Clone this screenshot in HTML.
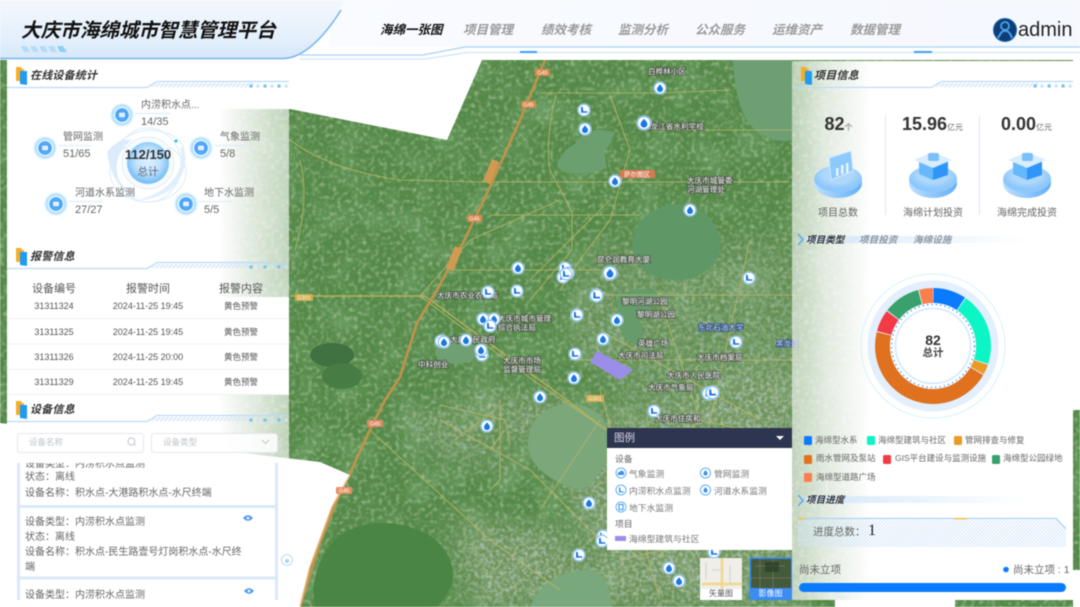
<!DOCTYPE html>
<html lang="zh"><head><meta charset="utf-8"><title>大庆市海绵城市智慧管理平台</title>
<style>
html,body{margin:0;padding:0;width:1080px;height:607px;overflow:hidden;background:#fff}
#r{position:absolute;left:0;top:0;width:1080px;height:607px;overflow:hidden;filter:blur(.4px);font-family:"Liberation Sans","Noto Sans CJK SC",sans-serif;color:#666}
.t{position:absolute;white-space:nowrap;line-height:0;font-size:10px}
.c{transform:translateX(-50%)}
.h{font-weight:700;font-style:italic;color:#333;font-size:11px;letter-spacing:.2px}
.n{font-weight:700;font-style:italic;color:#9a9a9a;font-size:12.5px}
.b{position:absolute}
svg{position:absolute;left:0;top:0}
text{font-family:"Liberation Sans","Noto Sans CJK SC",sans-serif}
.d{font-size:11px}
.r1{font-size:9px;color:#555}
.r2{font-size:8.5px;color:#555}
.l{font-size:8.5px;color:#666}
.i{font-size:8.8px;color:#777}
</style></head><body><div id="r">

<svg width="1080" height="607" viewBox="0 0 1080 607">
<defs>
<filter id="sp" x="0" y="0" width="100%" height="100%"><feTurbulence type="fractalNoise" baseFrequency=".24" numOctaves="3" seed="7"/><feColorMatrix values="0 0 0 0 .74 0 0 0 0 .8 0 0 0 0 .62 0 0 0 2.600 -1.250"/><feGaussianBlur stdDeviation=".4"/></filter>
<filter id="sp2" x="0" y="0" width="100%" height="100%"><feTurbulence type="fractalNoise" baseFrequency=".03" numOctaves="2" seed="3"/><feColorMatrix values="0 0 0 0 .22 0 0 0 0 .44 0 0 0 0 .2 0 0 0 2.500 -1.150"/></filter>
<filter id="sp3" x="0" y="0" width="100%" height="100%"><feTurbulence type="fractalNoise" baseFrequency=".28" numOctaves="2" seed="21"/><feColorMatrix values="0 0 0 0 .8 0 0 0 0 .82 0 0 0 0 .74 0 0 0 4 -1.800"/><feGaussianBlur stdDeviation=".3"/></filter>
<filter id="sp4" x="0" y="0" width="100%" height="100%"><feTurbulence type="fractalNoise" baseFrequency=".16" numOctaves="2" seed="40"/><feColorMatrix values="0 0 0 0 .45 0 0 0 0 .65 0 0 0 0 .85 0 0 0 6 -3.500"/></filter>
<filter id="bl" x="-20%" y="-20%" width="140%" height="140%"><feGaussianBlur stdDeviation="14"/></filter>
<mask id="um" maskUnits="userSpaceOnUse" x="0" y="60" width="1080" height="547"><g filter="url(#bl)" fill="#fff"><path d="M450 380 L640 420 L800 360 V607 H610L560 470Z"/><path d="M590 250 L800 240 V420 L640 420 L560 330Z" opacity=".6"/><path d="M450 520L560 530L610 607H470Z"/><path d="M385 410L470 410L520 470L440 460Z" opacity=".8"/></g></mask>
<symbol id="dr" viewBox="-7 -7 14 14" overflow="visible"><circle r="6.6" fill="#fff"/><circle r="5.8" fill="none" stroke="#4aa3f5" stroke-width=".8"/><path d="M0-3.8C1.6-1.7 3-.5 3 1.1A3 3 0 0 1-3 1.1C-3-.5-1.600-1.700 0-3.800Z" fill="#1b78e0"/></symbol>
<symbol id="lm" viewBox="-7 -7 14 14" overflow="visible"><circle r="6.6" fill="#fff"/><circle r="5.8" fill="none" stroke="#4aa3f5" stroke-width=".8"/><path d="M-3 2.8H3.300V1.200H-.6C-1-.2-1.200-2-1.400-3.400L-3-3Z" fill="#1b78e0"/></symbol>
</defs>
<rect x="0" y="60" width="1080" height="547" fill="#548948"/>
<rect x="0" y="60" width="1080" height="547" filter="url(#sp2)" opacity=".45"/>
<rect x="0" y="60" width="1080" height="547" filter="url(#sp)" opacity=".5"/>
<g mask="url(#um)">
<rect x="0" y="60" width="1080" height="547" fill="#9fa684" opacity=".35"/>
<rect x="0" y="60" width="1080" height="547" filter="url(#sp3)" opacity=".35"/>
<rect x="0" y="60" width="1080" height="547" filter="url(#sp4)" opacity=".4"/>
</g>
<!-- lakes -->
<path d="M557 165Q562 150 575 144Q583 130 600 130L615 132Q610 145 604 152L607 168Q590 175 575 173Q560 174 557 165Z" fill="#6c9f70"/>
<path d="M633 240C637 215 660 203 680 204C705 206 722 225 720 248C718 268 695 282 675 280C650 280 630 262 633 240Z" fill="#5f9767"/>
<path d="M733 60H792V140Q770 145 750 125Q735 105 733 60Z" fill="#6d9f72"/>
<path d="M528 440C530 415 550 403 572 404C592 405 610 420 610 440C608 465 595 485 580 490C560 485 526 470 528 440Z" fill="#7ca77b"/>
<path d="M618 295Q640 285 657 292L650 310L640 320L645 343Q625 345 618 325Z" fill="#669c6c"/>
<path d="M313 590C318 550 340 522 385 523C430 525 453 550 453 575C453 590 440 607 430 607H315Z" fill="#4a8544"/>
<ellipse cx="332" cy="355" rx="22" ry="12" fill="#3f7240"/>
<ellipse cx="342" cy="376" rx="20" ry="13" fill="#477d44"/>
<ellipse cx="456" cy="352" rx="21" ry="12" fill="#6fa073"/>
<path d="M530 607Q545 570 590 570Q610 575 612 607Z" fill="#79a87c"/>
<!-- roads -->
<g fill="none" stroke="#bdb86c" stroke-width="1.100" opacity=".75">
<path d="M290 296H420L530 378L680 480"/><path d="M420 296L470 240L560 200"/><path d="M540 93H660L730 90"/><path d="M480 182H620H790"/>
<path d="M556 95Q545 140 550 170L572 212L572 250L530 300"/><path d="M610 95L630 150L610 220L580 260L560 290"/>
<path d="M370 430L490 540L560 590"/><path d="M440 420L530 470L600 540"/><path d="M490 215H640"/><path d="M450 270H610"/>
<path d="M605 295H800"/><path d="M570 360H800"/><path d="M600 330L760 420"/><path d="M750 240L730 330L710 420"/><path d="M650 130H792"/>
<path d="M540 510L600 420"/><path d="M530 280L610 200"/><path d="M620 500L700 420L790 440"/><path d="M660 300L700 420"/><path d="M600 390L660 600"/>
<path d="M290 140Q330 170 400 180L480 182"/><path d="M300 160Q310 200 295 250"/><path d="M590 540L640 510L720 500"/><path d="M620 560L790 520"/>
<path d="M440 405L505 420L510 445M470 430L495 410M455 440L480 420M490 450L505 430M500 400L500 480L490 490"/>
</g>
<path d="M290 296H425L560 395L660 470L760 540" fill="none" stroke="#b8b35e" stroke-width="1.600" opacity=".85"/>
<path d="M545 60L520 120L490 187L463 243L437 290L417 323L400 377L385 400L370 430L350 473L337 500L320 543L300 607" fill="none" stroke="#c1934c" stroke-width="2.600"/>
<!-- white tiles -->
<path d="M7 60H482L447 140L290 109H7Z" fill="#fff"/>
<path d="M0 423L260 455L320 462L350 475L332 507L310 567L300 607H0Z" fill="#fff"/>
<path d="M300 607L310 567L332 507L350 475" fill="none" stroke="#e8b27a" stroke-width="1.400"/>
<path d="M1073 60H1080V410H1073Z M1073 570H1080V607H1073Z" fill="#fff"/>
<path d="M835 600H955V607H835Z" fill="#fff"/>
<!-- purple polygon -->
<path d="M597 351L633 370L620 380L590 362Z" fill="#9a8eea"/>
<!-- badges -->
<g font-size="5.500" text-anchor="middle" fill="#fff">
<rect x="535" y="69" width="15" height="7" rx="1" fill="#d88a4e"/><text x="542.500" y="74.600">G45</text>
<rect x="521" y="101" width="15" height="7" rx="1" fill="#d88a4e"/><text x="528.500" y="106.600">G45</text>
<rect x="467" y="215" width="15" height="7" rx="1" fill="#d88a4e"/><text x="474.500" y="220.600">G45</text>
<rect x="295" y="294" width="18" height="7" rx="1" fill="#cfae4e"/><text x="304" y="299.600">G301</text>
<rect x="586" y="395" width="18" height="7" rx="1" fill="#cfae4e"/><text x="595" y="400.600">G301</text>
<rect x="367" y="420" width="16" height="7" rx="1" fill="#dd8a64"/><text x="375" y="425.600">G45</text>
<rect x="336" y="487" width="16" height="7" rx="1" fill="#e58f64"/><text x="344" y="492.600">G45</text>
</g>
<g fill="#d09a52" transform="rotate(-68 492 172)"><rect x="480" y="167" width="24" height="8" rx="1"/></g>
<g fill="#d09a52" transform="rotate(-68 455 259)"><rect x="443" y="254" width="24" height="8" rx="1"/></g>
<rect x="620" y="170" width="35" height="8" rx="1" fill="#d97950"/>
<text x="637" y="176.500" font-size="6.500" text-anchor="middle" fill="#fff">萨尔图区</text>
<g font-size="7.600" fill="#eee" stroke="#444" stroke-width="1.800" paint-order="stroke" stroke-opacity=".7">
<text x="687" y="183">大庆市城管委</text><text x="687" y="192">河湖管理处</text>
<text x="597" y="262">昆仑润教育大厦</text><text x="437" y="298">大庆市农业农村局</text><text x="498" y="321">大庆市城市管理</text><text x="498" y="330">综合执法局</text><text x="450" y="342">大庆市民政府</text>
<text x="503" y="363">大庆市市场</text><text x="503" y="372">监督管理局</text><text x="418" y="367">中科创业</text><text x="618" y="358">大庆市司法局</text><text x="697" y="360">大庆市档案局</text>
<text x="667" y="378">大庆市人民医院</text><text x="648" y="390">大庆市气象局</text><text x="655" y="421">大庆市住房和</text><text x="622" y="304">黎明河湖公园</text><text x="637" y="317">黎明湖公园</text><text x="638" y="346">英雄广场</text>
<text x="648" y="74">白桦林小区</text><text x="643" y="129">黑龙江省水利学校</text>
</g>
<text x="698" y="330" font-size="7.600" fill="#cfe0ff" stroke="#2d4a80" stroke-width="1.500" paint-order="stroke">东北石油大学</text>
<text x="776" y="346" font-size="7.600" fill="#cfe0ff" stroke="#2d4a80" stroke-width="1.500" paint-order="stroke">黑龙江</text>
<!-- markers -->
<g>
<use href="#lm" x="577" y="103" width="14" height="14"/><use href="#dr" x="578" y="122" width="14" height="14"/><use href="#dr" x="653" y="81" width="14" height="14"/><use href="#dr" x="636" y="115" width="16" height="16"/>
<use href="#dr" x="608" y="174" width="14" height="14"/><use href="#dr" x="683" y="203" width="14" height="14"/><use href="#dr" x="511" y="261" width="14" height="14"/><use href="#dr" x="602" y="265" width="16" height="16"/>
<use href="#lm" x="558" y="261" width="14" height="14"/><use href="#lm" x="556" y="270" width="14" height="14"/><use href="#lm" x="561" y="266" width="14" height="14"/><use href="#lm" x="559" y="267" width="14" height="14"/>
<use href="#lm" x="742" y="271" width="14" height="14"/><use href="#lm" x="481" y="285" width="14" height="14"/><use href="#lm" x="510" y="284" width="14" height="14"/><use href="#lm" x="589" y="288" width="15" height="15"/><use href="#lm" x="570" y="308" width="14" height="14"/>
<use href="#dr" x="610" y="313" width="14" height="14"/><use href="#dr" x="476" y="312" width="14" height="14"/><use href="#dr" x="487" y="312" width="14" height="14"/><use href="#lm" x="483" y="319" width="14" height="14"/><use href="#dr" x="596" y="332" width="14" height="14"/>
<use href="#lm" x="434" y="334" width="14" height="14"/><use href="#dr" x="437" y="335" width="14" height="14"/><use href="#dr" x="459" y="333" width="14" height="14"/><use href="#lm" x="475" y="348" width="14" height="14"/><use href="#dr" x="474" y="343" width="14" height="14"/>
<use href="#lm" x="568" y="347" width="14" height="14"/><use href="#dr" x="567" y="371" width="14" height="14"/><use href="#dr" x="533" y="390" width="14" height="14"/><use href="#lm" x="729" y="335" width="14" height="14"/>
<use href="#lm" x="701" y="386" width="15" height="15"/><use href="#lm" x="705" y="385" width="15" height="15"/><use href="#lm" x="647" y="404" width="14" height="14"/><use href="#dr" x="480" y="419" width="14" height="14"/><use href="#dr" x="582" y="496" width="14" height="14"/>
<use href="#lm" x="596" y="529" width="14" height="14"/><use href="#lm" x="595" y="534" width="14" height="14"/><use href="#lm" x="572" y="548" width="14" height="14"/><use href="#dr" x="662" y="561" width="14" height="14"/><use href="#dr" x="672" y="574" width="14" height="14"/><use href="#lm" x="707" y="545" width="14" height="14"/>
</g>
</svg>

<!-- left panel -->
<div class="b" style="left:7px;top:61px;width:282px;height:402px;background:linear-gradient(90deg,#fff 75%,rgba(255,255,255,.62) 100%)"></div>
<div class="b" style="left:7px;top:297px;width:282px;height:98px;background:#fff"></div>
<div class="b" style="left:0;top:463px;width:289px;height:144px;background:#fff"></div>
<!-- right panel -->
<div class="b" style="left:792px;top:61px;width:281px;height:539px;background:linear-gradient(90deg,rgba(255,255,255,.58) 0,rgba(255,255,255,.82) 12%,#fff 28%)"></div>

<!-- header -->
<svg width="1080" height="70" viewBox="0 0 1080 70">
<defs>
<linearGradient id="hg" x1="0" y1="0" x2="0" y2="1"><stop offset="0" stop-color="#f4f8fd"/><stop offset=".7" stop-color="#e3effb"/><stop offset="1" stop-color="#d5e8fa"/></linearGradient>
<linearGradient id="hb" x1="0" y1="0" x2="1" y2="0"><stop offset="0" stop-color="#f9fbff"/><stop offset="1" stop-color="#f5f8fe"/></linearGradient>
<pattern id="ht" width="3" height="3" patternUnits="userSpaceOnUse" patternTransform="rotate(45)"><rect width="1.400" height="3" fill="#cfe4f8"/></pattern>
</defs>
<rect width="1080" height="60" fill="#fff"/>
<rect x="330" width="750" height="47" fill="url(#hb)"/>
<path d="M0 0H345L338 12Q315 52 290 58H0Z" fill="url(#hg)"/>
<path d="M0 58.500H285Q312 56 341 10" fill="none" stroke="#74b4ea" stroke-width="1.600"/>
<path d="M300 55H423L465 47H1080" fill="none" stroke="#a9d1f5" stroke-width="1.200"/>
<path d="M300 59H425L467 52.500H1080" fill="none" stroke="#cfe4f8" stroke-width="1.200"/>
<rect x="520" y="51" width="17" height="2" fill="#3ba0f5"/><rect x="914" y="51" width="18" height="2" fill="#3ba0f5"/>
<g fill="#b5dcf7"><path d="M21 46h6l3 6h-6z"/><path d="M30 46h6l3 6h-6z"/><path d="M39 46h6l3 6h-6z"/><path d="M48 46h6l3 6h-6z"/><path d="M57 46h6l4 6h-7z" fill="#8cd0f2"/></g>
<circle cx="1005" cy="30" r="11.500" fill="#0e3d78"/>
<circle cx="1005" cy="30" r="11.500" fill="none" stroke="#1a6ab0" stroke-width="1"/>
<circle cx="1005" cy="26" r="4" fill="none" stroke="#4ba2e8" stroke-width="1.800"/>
<path d="M998 38Q1002 30 1005 31Q1009 30 1012 38" fill="none" stroke="#4ba2e8" stroke-width="2"/>
</svg>
<div class="t" style="left:21px;top:31px;font-size:19.600px;font-weight:700;font-style:italic;color:#111">大庆市海绵城市智慧管理平台</div>
<div class="t n" style="left:380px;top:30px;color:#111">海绵一张图</div>
<div class="t n" style="left:463px;top:30px">项目管理</div>
<div class="t n" style="left:541px;top:30px">绩效考核</div>
<div class="t n" style="left:618px;top:30px">监测分析</div>
<div class="t n" style="left:695px;top:30px">公众服务</div>
<div class="t n" style="left:772px;top:30px">运维资产</div>
<div class="t n" style="left:850px;top:30px">数据管理</div>
<div class="t" style="left:1018px;top:30px;font-size:20px;color:#222">admin</div>

<!-- overlays svg: section headers, icons -->
<svg width="1080" height="607" viewBox="0 0 1080 607">
<defs>
<symbol id="hd" viewBox="0 0 282 30" overflow="visible">
<path d="M9 6h5l1 2h2v12H9z" fill="#f5ae24"/><path d="M13 10h7v14l-7-1z" fill="#1e9bf5"/>
<path d="M0 26.500H140L150 20.500H282" fill="none" stroke="#bcd9f5" stroke-width="1.200"/>
<path d="M144 26L149 22H250L245 26Z" fill="url(#ht)"/>
<g fill="#7cc3f5"><circle cx="244" cy="25" r="1.800"/><circle cx="258" cy="25" r="1.800"/><circle cx="272" cy="25" r="1.800"/></g>
<g fill="#c9e5fa"><circle cx="251" cy="25" r="1.800"/><circle cx="265" cy="25" r="1.800"/><circle cx="279" cy="25" r="1.800"/></g>
</symbol>
<radialGradient id="ic"><stop offset="0" stop-color="#8ed0ff"/><stop offset=".52" stop-color="#3f9ef8"/><stop offset=".6" stop-color="#f2faff"/><stop offset=".78" stop-color="#a6dbff"/><stop offset="1" stop-color="#dff2ff" stop-opacity=".3"/></radialGradient>
<symbol id="de" viewBox="-12 -12 24 24" overflow="visible"><circle r="12" fill="url(#ic)"/><rect x="-3.500" y="-2.800" width="7" height="5.500" rx="1" fill="#dff1ff" stroke="#2c86e8" stroke-width=".7"/></symbol>
<radialGradient id="cc" cx=".5" cy=".45" r=".55"><stop offset="0" stop-color="#dff1ff"/><stop offset=".55" stop-color="#bfe2fc"/><stop offset="1" stop-color="#6fbaf6"/></radialGradient>
<radialGradient id="pod" cx=".5" cy=".35"><stop offset="0" stop-color="#dceeff"/><stop offset="1" stop-color="#8ec8fb"/></radialGradient>
<linearGradient id="pd2" x1="0" x2="1" y1="0" y2="0"><stop offset="0" stop-color="#bfe0ff"/><stop offset="1" stop-color="#62aefa"/></linearGradient>
<symbol id="pd" viewBox="0 0 50 50" overflow="visible">
<ellipse cx="25" cy="33" rx="24" ry="15" fill="url(#pd2)"/><ellipse cx="25" cy="29" rx="24" ry="13.500" fill="url(#pod)"/><ellipse cx="25" cy="26" rx="15" ry="8" fill="#aed8fb"/>
</symbol>
<symbol id="cu" viewBox="0 0 50 50" overflow="visible">
<path d="M11 10L25 14V29L11 23Z" fill="#67b7fb"/><path d="M25 14L40 9V24L25 29Z" fill="#2f96f8"/>
<path d="M25 1L44 9L25 17L6 9Z" fill="#d8edff"/><rect x="20" y="2" width="11" height="8" rx="2" fill="#7cc0fa"/>
</symbol>
<linearGradient id="fb" x1="0" x2="1"><stop offset="0" stop-color="#d4e8fa"/><stop offset="1" stop-color="#d4e8fa" stop-opacity="0"/></linearGradient>
<pattern id="ph" width="2.500" height="2.500" patternUnits="userSpaceOnUse" patternTransform="rotate(45)"><rect width="1" height="2.500" fill="#d3e6f8"/></pattern>
</defs>
<use href="#hd" x="7" y="61" width="282" height="30"/>
<use href="#hd" x="7" y="242" width="282" height="30"/>
<use href="#hd" x="7" y="395" width="282" height="30"/>
<use href="#hd" x="792" y="61" width="281" height="30"/>

<!-- centre globe -->
<g fill="none" stroke="#dcecfb" stroke-width="1">
<ellipse cx="148" cy="172" rx="38" ry="30"/>
<ellipse cx="148" cy="165" rx="33" ry="37"/>
<path d="M112 150Q125 132 150 130Q178 132 184 148"/>
</g>
<path d="M107 152Q118 138 132 140Q112 155 118 178Q124 190 140 198Q112 190 107 152Z" fill="#d8eafb" opacity=".9"/>
<path d="M184 147Q190 172 170 190Q155 200 138 200Q168 192 178 172Q184 160 180 148Z" fill="#deedfb" opacity=".9"/>
<circle cx="148" cy="163" r="26" fill="#f6fbff" stroke="#e0eefb"/>
<circle cx="148" cy="163" r="21" fill="url(#cc)"/>
<circle cx="176" cy="141" r="1.500" fill="#1cb8f5"/>
<use href="#de" x="110" y="103" width="24" height="24"/>
<use href="#de" x="33" y="136" width="24" height="24"/>
<use href="#de" x="189" y="136" width="24" height="24"/>
<use href="#de" x="44" y="192" width="24" height="24"/>
<use href="#de" x="174" y="192" width="24" height="24"/>
<g stroke="#d8ecfc" stroke-width="1" fill="none">
<path d="M135 113.500H170"/><path d="M58 145.500H92"/><path d="M214 145.500H248"/><path d="M69 201.500H103"/><path d="M198 201.500H232"/>
</g>

<!-- table lines -->
<g stroke="#f0f2f5"><path d="M7 318.500H289M7 344H289M7 369.500H289M7 394.500H289"/></g>

<!-- search -->
<rect x="17.500" y="433.500" width="126" height="19" rx="3" fill="#fff" fill-opacity=".85" stroke="#e4e7ed"/>
<rect x="151.500" y="433.500" width="126" height="19" rx="3" fill="#fff" fill-opacity=".85" stroke="#e4e7ed"/>
<circle cx="131.500" cy="441.500" r="3.500" fill="none" stroke="#c0c4cc"/><path d="M134 444l1.500 1.500" stroke="#c0c4cc"/>
<path d="M262 440l3.500 3.500 3.500-3.500" fill="none" stroke="#c0c4cc"/>

<!-- device cards -->
<g fill="none" stroke="#dbe8f9" stroke-width="3">
<path d="M18.500 463V600M276.500 463V600"/>
<path d="M18 506.500H277M18 578H277"/>
</g>
<g fill="#4f9cf2"><path d="M243 518q5-5.500 10 0q-5 5.500-10 0Z"/><path d="M244 591q5-5.500 10 0q-5 5.500-10 0Z"/></g>
<circle cx="248" cy="518" r="1.300" fill="#fff"/><circle cx="249" cy="591" r="1.300" fill="#fff"/>
<circle cx="287" cy="560" r="5.500" fill="#fff" stroke="#bcdcf8"/><circle cx="287" cy="561" r="2" fill="#a8d2f6"/>

<!-- right top stats -->
<path d="M885.500 115V215M979.500 115V215" stroke="#d9eafb"/>
<use href="#pd" x="813" y="150" width="50" height="50"/>
<use href="#pd" x="908" y="150" width="50" height="50"/>
<use href="#pd" x="1002" y="150" width="50" height="50"/>
<path d="M829 158L851 151L853 171L831 180Z" fill="#8ccafb" stroke="#d2e9ff"/><g fill="#fff" opacity=".8"><rect x="836" y="168" width="2.500" height="8"/><rect x="841" y="165" width="2.500" height="9"/><rect x="846" y="163" width="2.500" height="10"/></g>
<use href="#cu" x="908" y="151" width="50" height="50"/>
<use href="#cu" x="1002" y="151" width="50" height="50"/>

<!-- tabs -->
<rect x="806" y="236" width="220" height="7" fill="url(#fb)"/>
<path d="M798 234l5 5.500-5 5.500" fill="none" stroke="#59aef5" stroke-width="1.600"/>

<!-- donut -->
<circle cx="933" cy="346" r="72" fill="none" stroke="#d6f2fb" stroke-width="1"/>
<circle cx="933" cy="346" r="65.500" fill="#e3effc"/>
<g fill="none" stroke-width="15" transform="rotate(-90 933 346)">
<circle cx="933" cy="346" r="50.500" pathLength="360" stroke="#0a7bff" stroke-dasharray="33 327" stroke-dashoffset="-.5"/>
<circle cx="933" cy="346" r="50.500" pathLength="360" stroke="#0cf5c4" stroke-dasharray="73.500 286.500" stroke-dashoffset="-34.500"/>
<circle cx="933" cy="346" r="50.500" pathLength="360" stroke="#ea9a26" stroke-dasharray="10 350" stroke-dashoffset="-109"/>
<circle cx="933" cy="346" r="50.500" pathLength="360" stroke="#e0711f" stroke-dasharray="164 196" stroke-dashoffset="-120"/>
<circle cx="933" cy="346" r="50.500" pathLength="360" stroke="#f33b45" stroke-dasharray="22 338" stroke-dashoffset="-285"/>
<circle cx="933" cy="346" r="50.500" pathLength="360" stroke="#39a26c" stroke-dasharray="37 323" stroke-dashoffset="-308"/>
<circle cx="933" cy="346" r="50.500" pathLength="360" stroke="#fa7f4c" stroke-dasharray="14 346" stroke-dashoffset="-346"/>
</g>
<circle cx="933" cy="346" r="43" fill="#fff"/>
<circle cx="933" cy="346" r="41.500" fill="none" stroke="#4a98ea" stroke-width="1.400" stroke-dasharray="1.400 3"/>
<circle cx="933" cy="346" r="37.500" fill="#fff" stroke="#cfe6fb" stroke-width="1.500"/>

<!-- legend swatches -->
<rect x="804" y="436" width="8" height="9" rx="1.500" fill="#0a7bff"/><rect x="867" y="436" width="8" height="9" rx="1.500" fill="#0cf5c4"/><rect x="954" y="436" width="8" height="9" rx="1.500" fill="#ea9a26"/>
<rect x="804" y="455" width="8" height="9" rx="1.500" fill="#e0711f"/><rect x="883" y="455" width="8" height="9" rx="1.500" fill="#f33b45"/><rect x="992" y="455" width="8" height="9" rx="1.500" fill="#39a26c"/>
<rect x="804" y="473" width="8" height="9" rx="1.500" fill="#fa7f4c"/>

<!-- progress -->
<rect x="806" y="496" width="220" height="7" fill="url(#fb)"/>
<path d="M798 495l5 5.500-5 5.500" fill="none" stroke="#59aef5" stroke-width="1.600"/>
<path d="M798 520H1056L1066 531V547H798Z" fill="url(#ph)"/>
<path d="M798 518.500H1056L1066 529" fill="none" stroke="#a8d1f7" stroke-width="1.300"/>
<rect x="798" y="518" width="7" height="1.500" fill="#f2c24a"/><rect x="954" y="518" width="13" height="1.500" fill="#f2c24a"/>
<circle cx="1006" cy="569.500" r="2.800" fill="#0a7bff"/>
<rect x="799" y="583" width="267" height="9" rx="4.500" fill="#0a7bff"/>

<!-- legend box -->
<rect x="607" y="428" width="185" height="122" fill="#fff"/>
<rect x="607" y="428" width="185" height="20" fill="#2e3550"/>
<path d="M776 436h8l-4 4z" fill="#fff"/>
<g fill="none" stroke="#62b0f7" stroke-width="1"><circle cx="621" cy="473" r="5"/><circle cx="705.500" cy="473" r="5"/><circle cx="621" cy="490" r="5"/><circle cx="705.500" cy="490" r="5"/><circle cx="621" cy="507" r="5"/></g>
<path d="M618 475q-1-3 1.500-3 1-2 3-1 2 0 1.500 4z" fill="#3d8fe8"/><path d="M705.500 470c1 1.500 2 2.300 2 3.500a2 2 0 0 1-4 0c0-1.200 1-2 2-3.500z" fill="#3d8fe8"/><path d="M619 487.500v5h4.500v-1.300h-3v-3.700z" fill="#3d8fe8"/><path d="M705.500 487c1 1.500 2 2.300 2 3.500a2 2 0 0 1-4 0c0-1.200 1-2 2-3.500z" fill="#3d8fe8"/><path d="M619 504.500h4v5h-4z" fill="none" stroke="#3d8fe8"/>
<rect x="615" y="536" width="11" height="5" fill="#9a8eea"/>
<!-- thumbs -->
<rect x="700" y="558" width="42" height="42" fill="#fff"/>
<rect x="700" y="558" width="42" height="31" fill="#efeee8"/>
<path d="M702 584H742M722 558V589" stroke="#f2d68a" stroke-width="2.500" fill="none"/>
<path d="M706 562V580M712 570H722M730 565V584" stroke="#d8d6cd" stroke-width="1.200" fill="none"/>
<rect x="750" y="558" width="41.500" height="41.500" fill="#3c8cf2" stroke="#2f8cff"/>
<rect x="751" y="559" width="40" height="29" fill="#445a3a"/>
<path d="M755 566H785M760 559V588M773 559V588M751 578H791" stroke="#7a7a60" stroke-width=".7"/>
<rect x="765" y="562" width="14" height="10" fill="#2a3c26" opacity=".7"/>
</svg>

<div class="t h" style="left:30px;top:76px">在线设备统计</div>
<div class="t h" style="left:30px;top:257px">报警信息</div>
<div class="t h" style="left:30px;top:410px">设备信息</div>
<div class="t h" style="left:814px;top:76px">项目信息</div>

<div class="t" style="left:141px;top:106px">内涝积水点...</div><div class="t d" style="left:141px;top:122px">14/35</div>
<div class="t" style="left:63px;top:137.500px">管网监测</div><div class="t d" style="left:63px;top:154px">51/65</div>
<div class="t" style="left:220px;top:137.500px">气象监测</div><div class="t d" style="left:220px;top:154px">5/8</div>
<div class="t" style="left:75px;top:193.500px">河道水系监测</div><div class="t d" style="left:75px;top:210px">27/27</div>
<div class="t" style="left:204px;top:193.500px">地下水监测</div><div class="t d" style="left:204px;top:210px">5/5</div>
<div class="t c" style="left:148px;top:155px;font-size:13px;font-weight:700;color:#333">112/150</div>
<div class="t c" style="left:148px;top:172px;font-size:10.500px;color:#667">总计</div>

<div class="t c" style="left:54px;top:289px;font-size:11px;color:#555">设备编号</div>
<div class="t c" style="left:148px;top:289px;font-size:11px;color:#555">报警时间</div>
<div class="t c" style="left:241px;top:289px;font-size:11px;color:#555">报警内容</div>
<div class="t c r1" style="left:54px;top:306px">31311324</div><div class="t c r1" style="left:148px;top:306px">2024-11-25 19:45</div><div class="t c r2" style="left:241px;top:306px">黄色预警</div>
<div class="t c r1" style="left:54px;top:332px">31311325</div><div class="t c r1" style="left:148px;top:332px">2024-11-25 19:45</div><div class="t c r2" style="left:241px;top:332px">黄色预警</div>
<div class="t c r1" style="left:54px;top:356.500px">31311326</div><div class="t c r1" style="left:148px;top:356.500px">2024-11-25 20:00</div><div class="t c r2" style="left:241px;top:356.500px">黄色预警</div>
<div class="t c r1" style="left:54px;top:381.500px">31311329</div><div class="t c r1" style="left:148px;top:381.500px">2024-11-25 19:45</div><div class="t c r2" style="left:241px;top:381.500px">黄色预警</div>

<div class="t" style="left:29px;top:442px;font-size:8.500px;color:#c0c4cc">设备名称</div>
<div class="t" style="left:163px;top:442px;font-size:8.500px;color:#c0c4cc">设备类型</div>

<div class="b" style="left:20px;top:463px;width:255px;height:137px;overflow:hidden">
<div class="t" style="left:5px;top:2px">设备类型：内涝积水点监测</div>
<div class="t" style="left:5px;top:15px">状态：离线</div>
<div class="t" style="left:5px;top:31px">设备名称：积水点-大港路积水点-水尺终端</div>
<div class="t" style="left:5px;top:59.500px">设备类型：内涝积水点监测</div>
<div class="t" style="left:5px;top:74.500px">状态：离线</div>
<div class="t" style="left:5px;top:89.500px">设备名称：积水点-民生路壹号灯岗积水点-水尺终</div>
<div class="t" style="left:5px;top:104.500px">端</div>
<div class="t" style="left:5px;top:132.500px">设备类型：内涝积水点监测</div>
</div>

<div class="t c" style="left:838.500px;top:124px;font-size:18px;font-weight:700;color:#333">82<span style="font-size:8px;font-weight:400;color:#666">个</span></div>
<div class="t c" style="left:932.500px;top:124px;font-size:18px;font-weight:700;color:#333">15.96<span style="font-size:8px;font-weight:400;color:#666">亿元</span></div>
<div class="t c" style="left:1026.500px;top:124px;font-size:18px;font-weight:700;color:#333">0.00<span style="font-size:8px;font-weight:400;color:#666">亿元</span></div>
<div class="t c" style="left:838px;top:213.500px">项目总数</div>
<div class="t c" style="left:933px;top:213.500px">海绵计划投资</div>
<div class="t c" style="left:1027px;top:213.500px">海绵完成投资</div>
<div class="t h" style="left:806px;top:241px;font-size:9.500px;letter-spacing:.1px">项目类型</div>
<div class="t h" style="left:859px;top:241px;font-size:9.500px;letter-spacing:.1px;color:#8a96a3">项目投资</div>
<div class="t h" style="left:913px;top:241px;font-size:9.500px;letter-spacing:.1px;color:#8a96a3">海绵设施</div>

<div class="t c" style="left:933px;top:340px;font-size:14px;font-weight:700;color:#333">82</div>
<div class="t c" style="left:933px;top:353px;font-size:10.500px;font-weight:700;color:#444">总计</div>

<div class="t l" style="left:815px;top:440px">海绵型水系</div><div class="t l" style="left:878px;top:440px">海绵型建筑与社区</div><div class="t l" style="left:965px;top:440px">管网排查与修复</div>
<div class="t l" style="left:816px;top:458px">雨水管网及泵站</div><div class="t l" style="left:895px;top:458px">GIS平台建设与监测设施</div><div class="t l" style="left:1003px;top:458px">海绵型公园绿地</div>
<div class="t l" style="left:816px;top:477px">海绵型道路广场</div>

<div class="t h" style="left:806px;top:501px;font-size:9.500px;letter-spacing:.1px">项目进度</div>
<div class="t" style="left:813px;top:532px;font-size:10.500px">进度总数：</div>
<div class="t" style="left:868px;top:531px;font-size:16px;color:#222;font-family:'Liberation Serif',serif">1</div>
<div class="t" style="left:799px;top:569.500px;font-size:10.500px">尚未立项</div>
<div class="t" style="left:1013px;top:569.500px;font-size:10.500px">尚未立项 : 1</div>

<div class="t" style="left:614px;top:438px;font-size:10.500px;color:#dde">图例</div>
<div class="t i" style="left:615px;top:459px;color:#666">设备</div>
<div class="t i" style="left:629px;top:473.500px">气象监测</div><div class="t i" style="left:714px;top:473.500px">管网监测</div>
<div class="t i" style="left:629px;top:490.500px">内涝积水点监测</div><div class="t i" style="left:714px;top:490.500px">河道水系监测</div>
<div class="t i" style="left:629px;top:507.500px">地下水监测</div>
<div class="t i" style="left:615px;top:524px;color:#666">项目</div>
<div class="t i" style="left:629px;top:538.500px">海绵型建筑与社区</div>
<div class="t c" style="left:721px;top:594px;font-size:8px;color:#555">矢量图</div>
<div class="t c" style="left:770.500px;top:594px;font-size:8px;color:#fff">影像图</div>
</div></body></html>
